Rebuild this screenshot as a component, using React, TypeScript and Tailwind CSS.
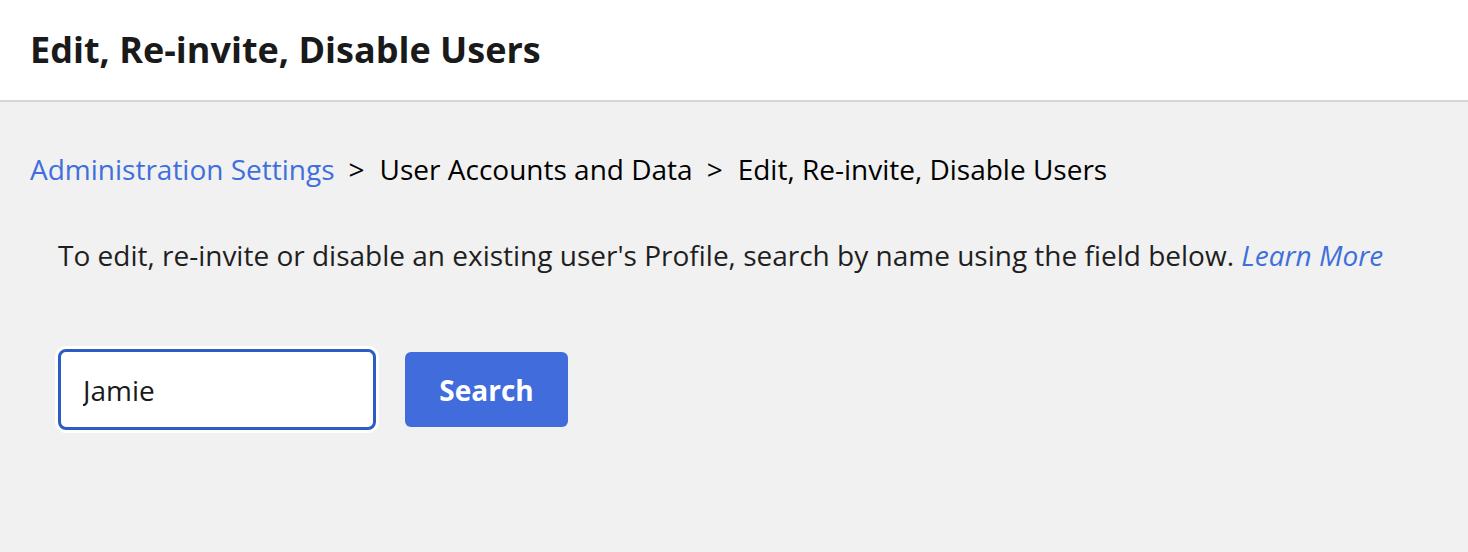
import React, { useState } from 'react';

export default function App() {
  const [query, setQuery] = useState('Jamie');
  return (
    <div className="min-h-screen bg-[#f1f1f1] font-['Open_Sans',sans-serif] text-[#1a1a1a]">
      <header className="h-[102px] bg-white border-b-2 border-[#d6d6d6] flex items-center px-[30px]">
        <h1 className="text-[36px] font-bold text-[#1a1a1a]">Edit, Re-invite, Disable Users</h1>
      </header>

      <main className="px-[30px] pt-[47px]">
        {/* Breadcrumb */}
        <nav className="flex items-center text-[28px] leading-[40px]">
          <a href="#" className="text-[#3f6fdc]">Administration Settings</a>
          <span className="ml-[14px] mr-[15px] text-black">&gt;</span>
          <span className="text-black">User Accounts and Data</span>
          <span className="ml-[14px] mr-[15px] text-black">&gt;</span>
          <span className="text-black">Edit, Re-invite, Disable Users</span>
        </nav>

        <p className="mt-[46px] ml-[28px] text-[28px] leading-[40px] text-[#1f1f1f]">
          To edit, re-invite or disable an existing user's Profile, search by name using the field below.{' '}
          <a href="#" className="italic text-[#3f6fdc]">Learn More</a>
        </p>

        <div className="mt-[74px] ml-[28px] flex items-center gap-[29px]">
          <input
            value={query}
            onChange={e => setQuery(e.target.value)}
            className="w-[318px] h-[81px] bg-white border-[3px] border-[#2a5ec4] rounded-[8px] px-[22px] text-[28px] text-[#1a1a1a] outline-none ring-[3px] ring-white"
          />
          <button className="w-[163px] h-[75px] bg-[#416ddc] rounded-[6px] text-white text-[28px] font-bold">
            Search
          </button>
        </div>
      </main>
    </div>
  );
}
